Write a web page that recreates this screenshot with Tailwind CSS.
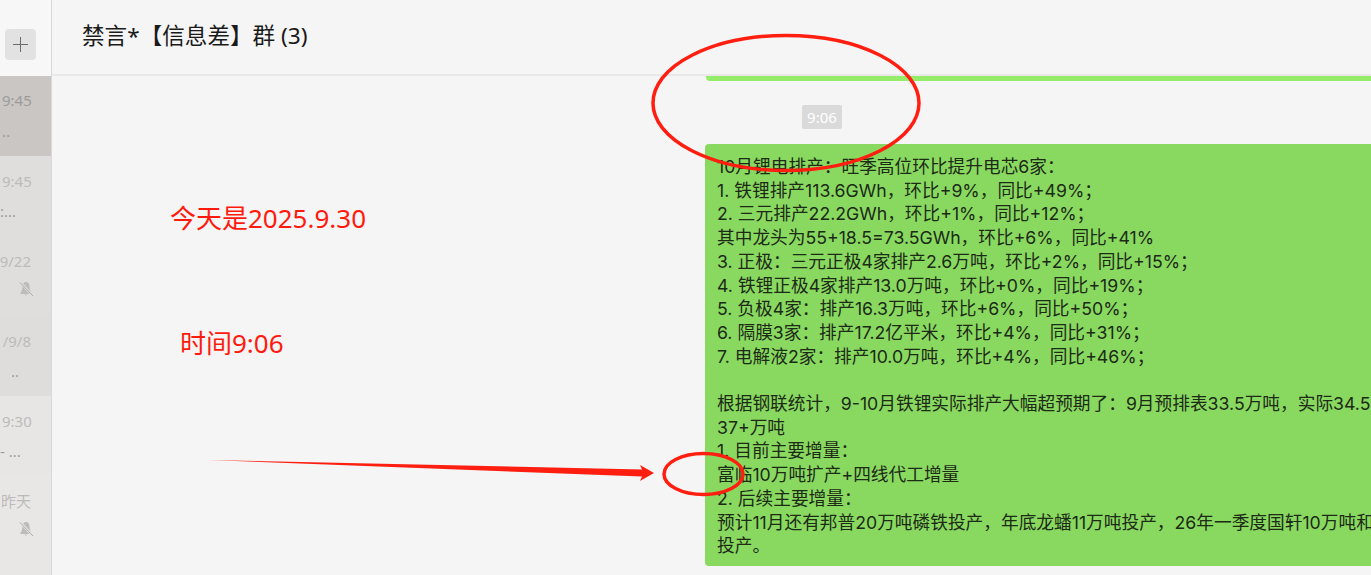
<!DOCTYPE html>
<html lang="zh-CN">
<head>
    <meta charset="UTF-8">
    <title>禁言*【信息差】群</title>
    <script src="https://cdn.jsdelivr.net/npm/@tailwindcss/browser@4"></script>
</head>
<body class="bg-[#f5f5f5] overflow-hidden font-['Noto_Sans','Noto_Sans_CJK_SC',sans-serif]">
<div class="relative flex h-[575px] w-[1371px] overflow-hidden">

    <!-- SIDEBAR -->
    <aside class="flex h-full w-[52px] shrink-0 flex-col overflow-hidden border-r border-[#d8d8d8] bg-[#e6e5e4]">
        <div class="flex h-[76px] shrink-0 items-start bg-[#f7f7f7] pl-[5px] pt-[29px]">
            <div class="flex h-[31px] w-[31px] items-center justify-center rounded-[4px] bg-[#e2e2e2]">
                <svg width="15" height="15" viewBox="0 0 15 15" fill="none" stroke="#6b6b6b" stroke-width="1"><path d="M7.5 0V15M0 7.5H15"/></svg>
            </div>
        </div>
        <div class="flex h-[80px] shrink-0 flex-col items-start bg-[#c9c6c3] pt-[14px] text-[15px] leading-5 text-[#9d9b99]">
            <span class="pl-[2px]">9:45</span>
            <span class="pl-[2px] pt-[11px]">..</span>
        </div>
        <div class="flex h-[80px] shrink-0 flex-col items-start bg-[#e0dedc] pt-[15px] text-[15px] leading-5 text-[#bcbbb9]">
            <span class="pl-[2px]">9:45</span>
            <span class="pt-[10px] text-[#9f9e9c]">:...</span>
        </div>
        <div class="flex h-[80px] shrink-0 flex-col items-end bg-[#dfdedd] pr-[20px] pt-[15px] text-[15px] leading-5 text-[#bcbbb9]">
            <span>9/22</span>
            <svg class="mr-[-3px] mt-[10px]" width="16" height="16" viewBox="0 0 16 16"><path d="M8 1c-2.500 0-3.500 2-3.500 4.500 0 3-1 5-2.500 7.500h12c-1.500-2.500-2.500-4.500-2.500-7.500C11.500 3 10.500 1 8 1z" fill="#bdbcba"/><path d="M6.500 13.500a1.600 1.600 0 0 0 3 0z" fill="#bdbcba"/><path d="M2.500 1.500l12 13" stroke="#dfdedd" stroke-width="2.500"/><path d="M2 1.500l13 13.500" stroke="#adacaa" stroke-width="1"/></svg>
        </div>
        <div class="flex h-[80px] shrink-0 flex-col items-end bg-[#dfdddc] pr-[20px] pt-[15px] text-[15px] leading-5 text-[#bcbbb9]">
            <span>/9/8</span>
            <span class="mr-[12px] pt-[10px] text-[#9f9e9c]">..</span>
        </div>
        <div class="flex h-[80px] shrink-0 flex-col items-start bg-[#e7e6e5] pt-[15px] text-[15px] leading-5 text-[#bcbbb9]">
            <span class="pl-[2px]">9:30</span>
            <span class="pt-[10px] text-[#9f9e9c]">- ...</span>
        </div>
        <div class="flex grow flex-col items-end bg-[#e8e7e6] pr-[20px] pt-[15px] text-[15px] leading-5 text-[#bcbbb9]">
            <span>昨天</span>
            <svg class="mr-[-3px] mt-[10px]" width="16" height="16" viewBox="0 0 16 16"><path d="M8 1c-2.500 0-3.500 2-3.500 4.500 0 3-1 5-2.500 7.500h12c-1.500-2.500-2.500-4.500-2.500-7.500C11.500 3 10.500 1 8 1z" fill="#bdbcba"/><path d="M6.500 13.500a1.600 1.600 0 0 0 3 0z" fill="#bdbcba"/><path d="M2.500 1.500l12 13" stroke="#e8e7e6" stroke-width="2.500"/><path d="M2 1.500l13 13.500" stroke="#adacaa" stroke-width="1"/></svg>
        </div>
    </aside>

    <!-- CHAT -->
    <main class="flex min-w-0 grow flex-col">
        <header class="flex h-[76px] shrink-0 items-center border-b-2 border-[#e9e9e9] bg-[#f5f5f5] pb-[2px] pl-[30px] text-[22.6px] text-[#1a1a1a]">禁言*【信息差】群 (3)</header>

        <div class="flex min-h-0 grow flex-col overflow-hidden pl-[653px]">
            <div class="ml-px h-[5px] w-[700px] shrink-0 rounded-b-[4px] bg-[#95ec69]"></div>
            <div class="flex h-[63px] shrink-0 items-start pl-[97px] pt-[24px]">
                <span class="flex h-[24px] w-[40px] items-center justify-center rounded-[2px] bg-[#dadada] text-[15px] text-white">9:06</span>
            </div>
            <div class="h-[422px] w-[701px] shrink-0 whitespace-nowrap rounded-[4px] bg-[#89d961] pl-[12px] pt-[11px] font-['Inter','Noto_Sans_CJK_SC',sans-serif] text-[17.7px] leading-[23.7px] text-[#1c2a16]">
                <p>10月锂电排产：旺季高位环比提升电芯6家：</p>
                <p>1. 铁锂排产113.6GWh，环比+9%，同比+49%；</p>
                <p>2. 三元排产22.2GWh，环比+1%，同比+12%；</p>
                <p>其中龙头为55+18.5=73.5GWh，环比+6%，同比+41%</p>
                <p>3. 正极：三元正极4家排产2.6万吨，环比+2%，同比+15%；</p>
                <p>4. 铁锂正极4家排产13.0万吨，环比+0%，同比+19%；</p>
                <p>5. 负极4家：排产16.3万吨，环比+6%，同比+50%；</p>
                <p>6. 隔膜3家：排产17.2亿平米，环比+4%，同比+31%；</p>
                <p>7. 电解液2家：排产10.0万吨，环比+4%，同比+46%；</p>
                <p>&nbsp;</p>
                <p>根据钢联统计，9-10月铁锂实际排产大幅超预期了：9月预排表33.5万吨，实际34.5万吨</p>
                <p>37+万吨</p>
                <p>1. 目前主要增量：</p>
                <p>富临10万吨扩产+四线代工增量</p>
                <p>2. 后续主要增量：</p>
                <p>预计11月还有邦普20万吨磷铁投产，年底龙蟠11万吨投产，26年一季度国轩10万吨和</p>
                <p>投产。</p>
            </div>
        </div>
    </main>

    <!-- RED ANNOTATIONS drawn over the screenshot -->
    <span class="absolute left-[170px] top-[201px] text-[26px] leading-[34px] text-[#ff1a0d]">今天是2025.9.30</span>
    <span class="absolute left-[180px] top-[326px] text-[26px] leading-[34px] text-[#ff1a0d]">时间9:06</span>
    <svg class="pointer-events-none absolute inset-0" width="1371" height="575" viewBox="0 0 1371 575" fill="none">
        <ellipse cx="786" cy="103" rx="133" ry="67.500" stroke="#ff1e10" stroke-width="3.500"/>
        <ellipse cx="703.500" cy="474" rx="39.500" ry="20.500" stroke="#ff1e10" stroke-width="3.500"/>
        <path d="M208 460L642 469.500L640 465L654 473L640 481L642 476.500Z" fill="#ff1e10"/>
    </svg>
</div>
</body>
</html>
